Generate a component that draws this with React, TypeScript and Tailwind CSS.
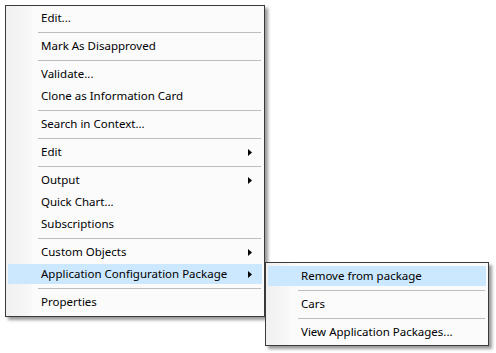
import React from "react";

type Entry = { label?: string; sub?: boolean; active?: boolean; sep?: boolean };

const MAIN: Entry[] = [
  { label: "Edit..." },
  { sep: true },
  { label: "Mark As Disapproved" },
  { sep: true },
  { label: "Validate..." },
  { label: "Clone as Information Card" },
  { sep: true },
  { label: "Search in Context..." },
  { sep: true },
  { label: "Edit", sub: true },
  { sep: true },
  { label: "Output", sub: true },
  { label: "Quick Chart..." },
  { label: "Subscriptions" },
  { sep: true },
  { label: "Custom Objects", sub: true },
  { label: "Application Configuration Package", sub: true, active: true },
  { sep: true },
  { label: "Properties" },
];

const SUB: Entry[] = [
  { label: "Remove from package", active: true },
  { sep: true },
  { label: "Cars" },
  { sep: true },
  { label: "View Application Packages..." },
];

function Arrow() {
  return (
    <svg width="4" height="7" viewBox="0 0 4 7" className="shrink-0">
      <path d="M0 0 L4 3.5 L0 7 Z" fill="#000" />
    </svg>
  );
}

function Menu({ items, width, gutter, pad }: { items: Entry[]; width: string; gutter: string; pad: string }) {
  return (
    <div
      className={`relative ${width} ${pad} border border-[#3a3a3a] bg-[#fbfbfb] shadow-[3px_3px_3px_rgba(0,0,0,0.4)]`}
    >
      {/* gutter stripe */}
      <div className={`absolute left-0 top-0 bottom-0 ${gutter} bg-gradient-to-r from-[#f0f0f0] to-[#f8f8f8]`} />
      {items.map((it, i) =>
        it.sep ? (
          <div key={i} className="relative h-[6px] flex items-center pl-[32px] pr-[3px]">
            <div className="h-px w-full bg-[#bdbdbd]" />
          </div>
        ) : (
          <div key={i} className="relative h-[22px] px-[2px] py-px">
            <div
              className={`h-full flex items-center pl-[33px] pr-[10px] ${it.active ? "bg-[#cce8ff]" : ""}`}
            >
              <span className="flex-1 text-[11.5px] text-black leading-none whitespace-nowrap">{it.label}</span>
              {it.sub && <Arrow />}
            </div>
          </div>
        )
      )}
    </div>
  );
}

export default function App() {
  return (
    <div
      className="relative w-[496px] h-[353px] bg-white overflow-hidden"
      style={{ fontFamily: '"Noto Sans", "Open Sans", sans-serif' }}
    >
      <div className="pl-[5px] pt-[5px]">
        <Menu items={MAIN} width="w-[260px]" gutter="w-[26px]" pad="pt-px pb-[3px]" />
      </div>
      {/* submenu */}
      <div className="absolute left-[265px] top-[262px]">
        <Menu items={SUB} width="w-[224px]" gutter="w-[24px]" pad="py-[2px]" />
      </div>
    </div>
  );
}
